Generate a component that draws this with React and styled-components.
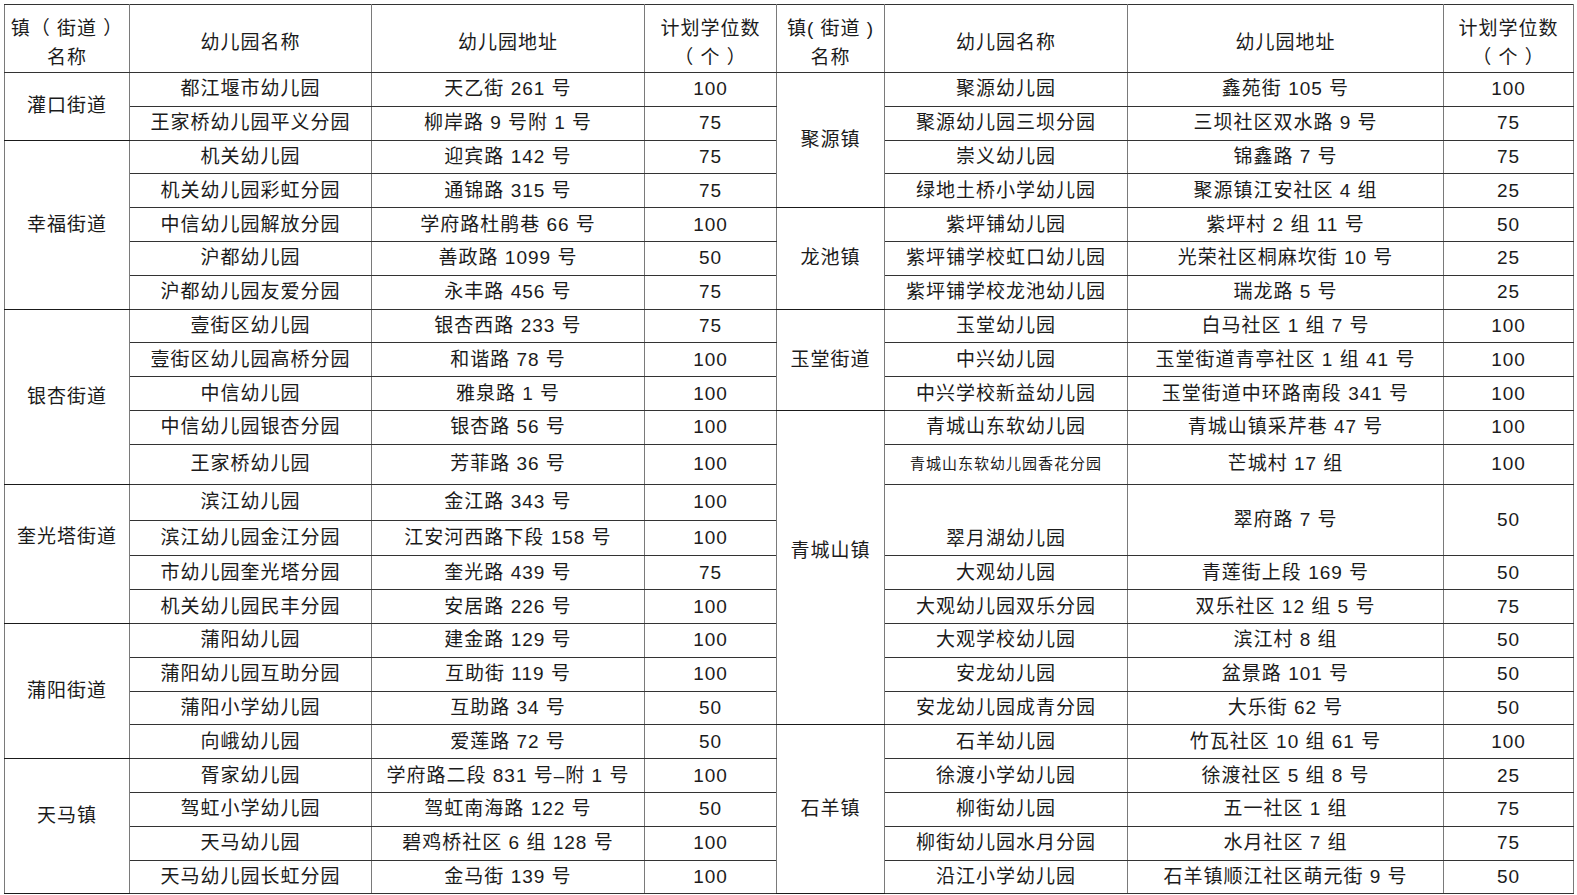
import React from "react";
import styled, { createGlobalStyle } from "styled-components";

const GlobalStyle = createGlobalStyle`
  html, body {
    margin: 0;
    padding: 0;
    background: #ffffff;
  }
  body {
    font-family: "Liberation Sans", "Noto Sans CJK SC", sans-serif;
    color: #1b1b1b;
  }
`;

const Page = styled.div`
  padding: 4px 0 0 4px;
`;

const Table = styled.table`
  width: 1570px;
  table-layout: fixed;
  border-collapse: collapse;
  font-family: "Liberation Sans", "Noto Sans CJK SC", sans-serif;
  font-size: 19px;
  letter-spacing: 1px;
  color: #1b1b1b;
`;

const HeadCell = styled.th`
  height: 59px;
  padding: 8px 0 0;
  font-weight: normal;
  line-height: 29px;
  text-align: center;
  vertical-align: middle;
  white-space: pre;
  border-top: 1px solid #333;
  border-bottom: 1px solid #333;
  border-left: 1px solid #7a7a7a;
  border-right: 1px solid #7a7a7a;
`;

const ROW = 33.8;
const TALL = 40;

const Cell = styled.td`
  height: ${(p) => (p.$tall ? TALL : ROW) * (p.rowSpan || 1) - 1}px;
  padding: 0 0 ${(p) => (p.$bottom ? 4 : 0)}px;
  font-size: ${(p) => (p.$small ? 15 : 19)}px;
  line-height: 24px;
  text-align: center;
  vertical-align: ${(p) => (p.$bottom ? "bottom" : "middle")};
  white-space: nowrap;
  border-top: 1px solid #333;
  border-bottom: 1px solid #333;
  border-left: 1px solid #7a7a7a;
  border-right: 1px solid #7a7a7a;
`;

const GroupCell = styled(Cell)`
  height: auto;
  padding: 0 0 ${(p) => p.$lift || 0}px;
  border-top: 1px solid #1a1a1a;
  border-bottom: 1px solid #1a1a1a;
`;

const widths = [125, 242, 273, 132, 108, 243, 316, 130];

const left = [
  { g: "灌口街道", gs: 2, n: "都江堰市幼儿园", a: "天乙街 261 号", c: 100 },
  { n: "王家桥幼儿园平义分园", a: "柳岸路 9 号附 1 号", c: 75 },
  { g: "幸福街道", gs: 5, n: "机关幼儿园", a: "迎宾路 142 号", c: 75 },
  { n: "机关幼儿园彩虹分园", a: "通锦路 315 号", c: 75 },
  { n: "中信幼儿园解放分园", a: "学府路杜鹃巷 66 号", c: 100 },
  { n: "沪都幼儿园", a: "善政路 1099 号", c: 50 },
  { n: "沪都幼儿园友爱分园", a: "永丰路 456 号", c: 75 },
  { g: "银杏街道", gs: 5, n: "壹街区幼儿园", a: "银杏西路 233 号", c: 75 },
  { n: "壹街区幼儿园高桥分园", a: "和谐路 78 号", c: 100 },
  { n: "中信幼儿园", a: "雅泉路 1 号", c: 100 },
  { n: "中信幼儿园银杏分园", a: "银杏路 56 号", c: 100 },
  { n: "王家桥幼儿园", a: "芳菲路 36 号", c: 100 },
  { g: "奎光塔街道", gs: 4, lift: 34, n: "滨江幼儿园", a: "金江路 343 号", c: 100 },
  { n: "滨江幼儿园金江分园", a: "江安河西路下段 158 号", c: 100 },
  { n: "市幼儿园奎光塔分园", a: "奎光路 439 号", c: 75 },
  { n: "机关幼儿园民丰分园", a: "安居路 226 号", c: 100 },
  { g: "蒲阳街道", gs: 4, n: "蒲阳幼儿园", a: "建金路 129 号", c: 100 },
  { n: "蒲阳幼儿园互助分园", a: "互助街 119 号", c: 100 },
  { n: "蒲阳小学幼儿园", a: "互助路 34 号", c: 50 },
  { n: "向峨幼儿园", a: "爱莲路 72 号", c: 50 },
  { g: "天马镇", gs: 4, lift: 20, n: "胥家幼儿园", a: "学府路二段 831 号–附 1 号", c: 100 },
  { n: "驾虹小学幼儿园", a: "驾虹南海路 122 号", c: 50 },
  { n: "天马幼儿园", a: "碧鸡桥社区 6 组 128 号", c: 100 },
  { n: "天马幼儿园长虹分园", a: "金马街 139 号", c: 100 },
];

const right = [
  { g: "聚源镇", gs: 4, n: "聚源幼儿园", a: "鑫苑街 105 号", c: 100 },
  { n: "聚源幼儿园三坝分园", a: "三坝社区双水路 9 号", c: 75 },
  { n: "崇义幼儿园", a: "锦鑫路 7 号", c: 75 },
  { n: "绿地土桥小学幼儿园", a: "聚源镇江安社区 4 组", c: 25 },
  { g: "龙池镇", gs: 3, n: "紫坪铺幼儿园", a: "紫坪村 2 组 11 号", c: 50 },
  { n: "紫坪铺学校虹口幼儿园", a: "光荣社区桐麻坎街 10 号", c: 25 },
  { n: "紫坪铺学校龙池幼儿园", a: "瑞龙路 5 号", c: 25 },
  { g: "玉堂街道", gs: 3, n: "玉堂幼儿园", a: "白马社区 1 组 7 号", c: 100 },
  { n: "中兴幼儿园", a: "玉堂街道青亭社区 1 组 41 号", c: 100 },
  { n: "中兴学校新益幼儿园", a: "玉堂街道中环路南段 341 号", c: 100 },
  { g: "青城山镇", gs: 9, lift: 34, n: "青城山东软幼儿园", a: "青城山镇采芹巷 47 号", c: 100 },
  { n: "青城山东软幼儿园香花分园", small: true, a: "芒城村 17 组", c: 100 },
  { n: "翠月湖幼儿园", span: 2, bottom: true, a: "翠府路 7 号", c: 50 },
  null,
  { n: "大观幼儿园", a: "青莲街上段 169 号", c: 50 },
  { n: "大观幼儿园双乐分园", a: "双乐社区 12 组 5 号", c: 75 },
  { n: "大观学校幼儿园", a: "滨江村 8 组", c: 50 },
  { n: "安龙幼儿园", a: "盆景路 101 号", c: 50 },
  { n: "安龙幼儿园成青分园", a: "大乐街 62 号", c: 50 },
  { g: "石羊镇", gs: 5, n: "石羊幼儿园", a: "竹瓦社区 10 组 61 号", c: 100 },
  { n: "徐渡小学幼儿园", a: "徐渡社区 5 组 8 号", c: 25 },
  { n: "柳街幼儿园", a: "五一社区 1 组", c: 75 },
  { n: "柳街幼儿园水月分园", a: "水月社区 7 组", c: 75 },
  { n: "沿江小学幼儿园", a: "石羊镇顺江社区萌元街 9 号", c: 50 },
];

const TALL_ROW = 11;

function SideCells({ row, tall }) {
  if (!row) return null;
  const span = row.span || 1;
  return (
    <>
      {row.g && (
        <GroupCell rowSpan={row.gs} $lift={row.lift}>
          {row.g}
        </GroupCell>
      )}
      <Cell rowSpan={span} $tall={tall} $small={row.small} $bottom={row.bottom}>
        {row.n}
      </Cell>
      <Cell rowSpan={span} $tall={tall}>
        {row.a}
      </Cell>
      <Cell rowSpan={span} $tall={tall}>
        {row.c}
      </Cell>
    </>
  );
}

export default function App() {
  return (
    <Page>
      <GlobalStyle />
      <Table>
        <colgroup>
          {widths.map((w, i) => (
            <col key={i} style={{ width: w }} />
          ))}
        </colgroup>
        <thead>
          <tr>
            <HeadCell>{"镇（ 街道 ）\n名称"}</HeadCell>
            <HeadCell>幼儿园名称</HeadCell>
            <HeadCell>幼儿园地址</HeadCell>
            <HeadCell>{"计划学位数\n（ 个 ）"}</HeadCell>
            <HeadCell>{"镇( 街道 )\n名称"}</HeadCell>
            <HeadCell>幼儿园名称</HeadCell>
            <HeadCell>幼儿园地址</HeadCell>
            <HeadCell>{"计划学位数\n（ 个 ）"}</HeadCell>
          </tr>
        </thead>
        <tbody>
          {left.map((row, i) => (
            <tr key={i}>
              <SideCells row={row} tall={i === TALL_ROW} />
              <SideCells row={right[i]} tall={i === TALL_ROW} />
            </tr>
          ))}
        </tbody>
      </Table>
    </Page>
  );
}
